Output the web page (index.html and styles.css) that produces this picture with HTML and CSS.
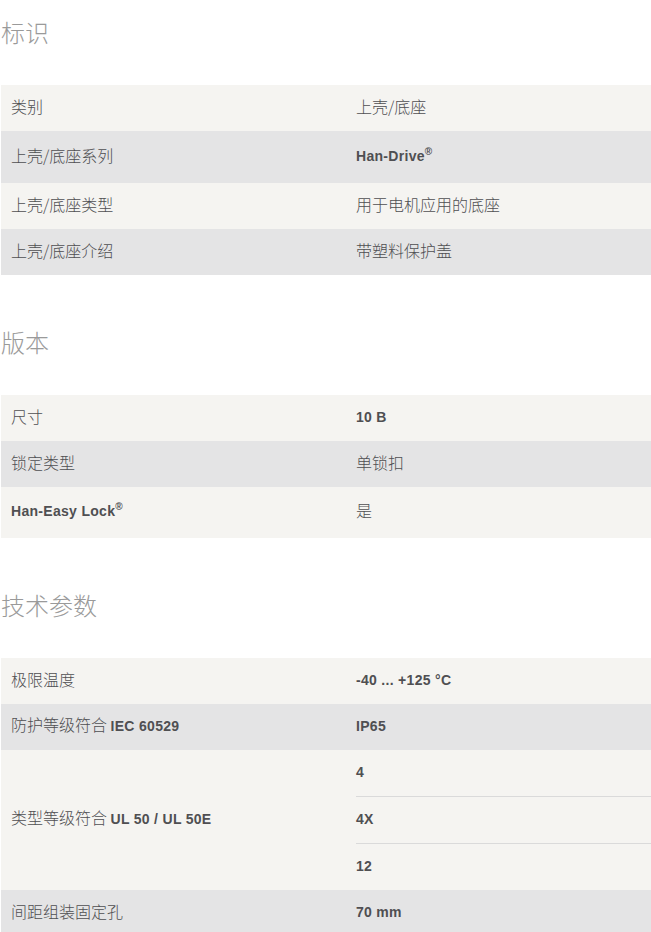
FILE: index.html
```html
<!DOCTYPE html>
<html lang="zh-CN">
<head>
<meta charset="utf-8">
<title>标识</title>
<link rel="stylesheet" href="styles.css">
</head>
<body>
<section class="section first">
  <h2 class="heading">标识</h2>
  <div class="table">
    <div class="row odd"><div class="label">类别</div><div class="value">上壳/底座</div></div>
    <div class="row even tall"><div class="label">上壳/底座系列</div><div class="value"><span class="lat">Han-Drive<sup>®</sup></span></div></div>
    <div class="row odd"><div class="label">上壳/底座类型</div><div class="value">用于电机应用的底座</div></div>
    <div class="row even"><div class="label">上壳/底座介绍</div><div class="value">带塑料保护盖</div></div>
  </div>
</section>
<section class="section">
  <h2 class="heading">版本</h2>
  <div class="table">
    <div class="row odd"><div class="label">尺寸</div><div class="value"><span class="lat">10 B</span></div></div>
    <div class="row even"><div class="label">锁定类型</div><div class="value">单锁扣</div></div>
    <div class="row odd tall"><div class="label"><span class="lat">Han-Easy Lock<sup>®</sup></span></div><div class="value">是</div></div>
  </div>
</section>
<section class="section">
  <h2 class="heading">技术参数</h2>
  <div class="table">
    <div class="row odd"><div class="label">极限温度</div><div class="value"><span class="lat">-40 ... +125 °C</span></div></div>
    <div class="row even"><div class="label">防护等级符合 <span class="lat">IEC 60529</span></div><div class="value"><span class="lat">IP65</span></div></div>
    <div class="row odd multi">
      <div class="label">类型等级符合 <span class="lat">UL 50 / UL 50E</span></div>
      <div class="values">
        <div class="sub"><span class="lat">4</span></div>
        <div class="sub"><span class="lat">4X</span></div>
        <div class="sub"><span class="lat">12</span></div>
      </div>
    </div>
    <div class="row even"><div class="label">间距组装固定孔</div><div class="value"><span class="lat">70 mm</span></div></div>
  </div>
</section>
</body>
</html>
```
FILE: styles.css
```css
html, body {
  margin: 0;
  padding: 0;
  background: #ffffff;
}
body {
  font-family: "Noto Sans CJK SC", "Liberation Sans", sans-serif;
  color: #4f4f52;
  font-size: 16px;
}
.section {
  padding-top: 35px;
}
.section.first {
  padding-top: 0;
}
.heading {
  margin: 16px 0 37px 1px;
  height: 32px;
  line-height: 32px;
  font-size: 24px;
  font-weight: 300;
  color: #9a9a9a;
}
.table {
  padding-left: 1px;
}
.row {
  display: grid;
  grid-template-columns: 345px 1fr;
  min-height: 46px;
  align-items: center;
}
.row.tall {
  min-height: 51.5px;
}
.row.odd {
  background: #f5f4f1;
}
.row.even {
  background: #e4e4e5;
}
.label, .value {
  padding-left: 10px;
  padding-bottom: 4px;
  font-weight: 300;
  line-height: 20px;
}
.lat {
  font-family: "Liberation Sans", sans-serif;
  font-weight: 700;
  font-size: 14px;
  letter-spacing: 0.3px;
}
sup {
  font-size: 10px;
  line-height: 0;
  vertical-align: 6px;
}
.values {
  padding-left: 10px;
  display: flex;
  flex-direction: column;
}
.sub {
  height: 46px;
  box-sizing: border-box;
  padding-bottom: 2px;
  display: flex;
  align-items: center;
  border-top: 1px solid #dadada;
}
.sub:first-child {
  border-top: none;
}
.sub + .sub {
  height: 47px;
}
```
